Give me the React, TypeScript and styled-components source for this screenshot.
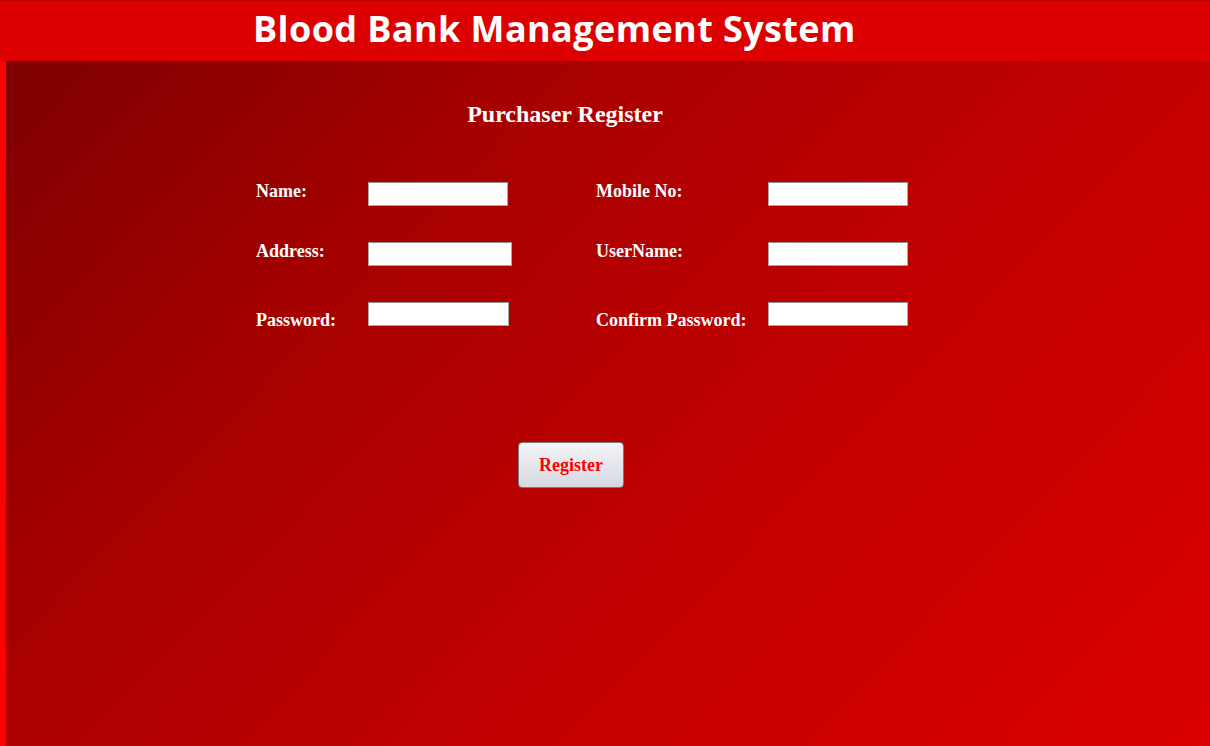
import React from "react";
import styled, { createGlobalStyle } from "styled-components";

const GlobalStyle = createGlobalStyle`
  html, body {
    margin: 0;
    padding: 0;
  }
  #root {
    min-height: 100vh;
    display: flex;
    flex-direction: column;
  }
`;

const Page = styled.div`
  flex: 1;
  display: flex;
  flex-direction: column;
  min-height: 100vh;
`;

const Header = styled.header`
  height: 60px;
  background: #dd0000;
  border-top: 1px solid #c30000;
  display: flex;
  align-items: center;
  padding-left: 253px;
`;

const HeaderTitle = styled.h1`
  margin: 0;
  color: #ffffff;
  font-family: "Open Sans", "DejaVu Sans", sans-serif;
  font-weight: 700;
  font-size: 36px;
  letter-spacing: 0.4px;
  line-height: 1;
  padding-bottom: 4px;
`;

const Main = styled.main`
  flex: 1;
  border-left: 6px solid #ff0000;
  background: linear-gradient(134deg, #7e0000 0%, #a80000 30%, #c20000 62%, #dc0000 100%);
  font-family: "Liberation Serif", "Times New Roman", serif;
  color: #ffffff;
`;

const FormTitle = styled.h2`
  margin: 39px 0 0 0;
  padding-left: 444px;
  width: 230px;
  text-align: center;
  font-size: 24px;
  font-weight: 700;
  line-height: 28px;
`;

const FormGrid = styled.div`
  display: grid;
  grid-template-columns: 112px 228px 172px 140px;
  grid-auto-rows: 60px;
  margin: 54px 0 0 250px;
  align-items: start;
`;

const Label = styled.label<{ $drop?: number }>`
  font-size: 18px;
  font-weight: 700;
  line-height: 20px;
  margin-top: ${(p) => p.$drop ?? -1}px;
`;

const Input = styled.input<{ $w?: number }>`
  box-sizing: border-box;
  width: ${(p) => p.$w ?? 140}px;
  height: 24px;
  margin: 0;
  border: 1px solid #a8a8a8;
  border-top-color: #8e8e8e;
  background: #ffffff;
  padding: 2px 4px;
  font-family: "Liberation Sans", Arial, sans-serif;
  font-size: 13px;
`;

const ButtonRow = styled.div`
  padding: 80px 0 0 512px;
`;

const RegisterButton = styled.button`
  width: 106px;
  height: 46px;
  border: 1px solid #7a7a80;
  border-radius: 4px;
  background: linear-gradient(to bottom, #f3f4f7 0%, #e4e6ec 50%, #d4d8e1 100%);
  color: #ff0000;
  font-family: "Liberation Serif", "Times New Roman", serif;
  font-weight: 700;
  font-size: 18px;
  padding-top: 2px;
  cursor: pointer;
`;

const fields: { label: string; width?: number; type?: string; drop?: number }[] = [
  { label: "Name:" },
  { label: "Mobile No:" },
  { label: "Address:", width: 144 },
  { label: "UserName:" },
  { label: "Password:", width: 141, type: "password", drop: 8 },
  { label: "Confirm Password:", type: "password", drop: 8 },
];

const App = () => (
  <>
    <GlobalStyle />
    <Page>
      <Header>
        <HeaderTitle>Blood Bank Management System</HeaderTitle>
      </Header>
      <Main>
        <FormTitle>Purchaser Register</FormTitle>
        <FormGrid>
          {fields.map((f) => (
            <React.Fragment key={f.label}>
              <Label $drop={f.drop}>{f.label}</Label>
              <Input type={f.type ?? "text"} $w={f.width} />
            </React.Fragment>
          ))}
        </FormGrid>
        <ButtonRow>
          <RegisterButton>Register</RegisterButton>
        </ButtonRow>
      </Main>
    </Page>
  </>
);

export default App;
